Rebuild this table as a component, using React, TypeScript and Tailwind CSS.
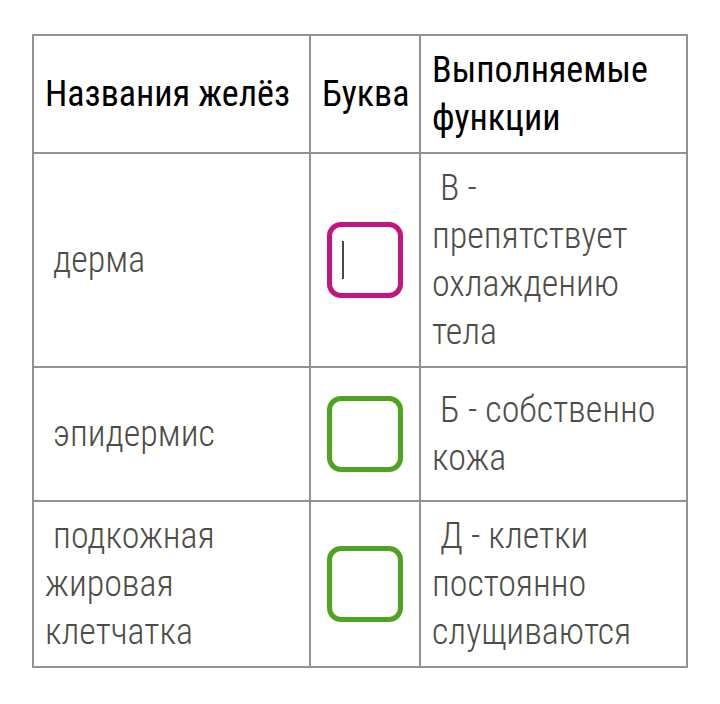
import React from 'react';

const cell = 'border-2 border-[#929292] align-middle';
const font = { fontFamily: '"Roboto Condensed", Roboto, "Noto Sans", sans-serif' };

const Box: React.FC<{ color: string; caret?: boolean }> = ({ color, caret }) => (
  <div className={`mx-auto w-[76px] h-[76px] rounded-[14px] border-[5px] ${color} flex items-center pl-[10px]`}>
    {caret && <div className="w-[2px] h-[38px] bg-[#4a4a44]" />}
  </div>
);

export default function App() {
  return (
    <div className="w-[720px] h-[704px] bg-white pt-[34px] pl-[32px]" style={font}>
      <table className="border-collapse w-[654px] table-fixed text-[36px] leading-[48px]">
        <colgroup>
          <col className="w-[277px]" />
          <col className="w-[110px]" />
          <col className="w-[267px]" />
        </colgroup>
        <tbody>
          <tr className="h-[118px] text-black">
            <td className={`${cell} px-[11px]`}>Названия желёз</td>
            <td className={`${cell} px-[11px]`}>Буква</td>
            <td className={`${cell} px-[11px]`}>
              Выполняемые
              <br />
              функции
            </td>
          </tr>
          <tr className="h-[214px] font-light text-[#4d4d47]">
            <td className={`${cell} px-[11px] whitespace-pre`}> дерма</td>
            <td className={cell}>
              <Box color="border-[#c2157e]" caret />
            </td>
            <td className={`${cell} px-[11px] whitespace-pre`}>
              {' В -'}
              <br />
              препятствует
              <br />
              охлаждению
              <br />
              тела
            </td>
          </tr>
          <tr className="h-[134px] font-light text-[#4d4d47]">
            <td className={`${cell} px-[11px] whitespace-pre`}> эпидермис</td>
            <td className={cell}>
              <Box color="border-[#4da51f]" />
            </td>
            <td className={`${cell} px-[11px] whitespace-pre`}>
              {' Б - собственно'}
              <br />
              кожа
            </td>
          </tr>
          <tr className="h-[166px] font-light text-[#4d4d47]">
            <td className={`${cell} px-[11px] whitespace-pre`}>
              {' подкожная'}
              <br />
              жировая
              <br />
              клетчатка
            </td>
            <td className={cell}>
              <Box color="border-[#4da51f]" />
            </td>
            <td className={`${cell} px-[11px] whitespace-pre`}>
              {' Д - клетки'}
              <br />
              постоянно
              <br />
              слущиваются
            </td>
          </tr>
        </tbody>
      </table>
    </div>
  );
}
